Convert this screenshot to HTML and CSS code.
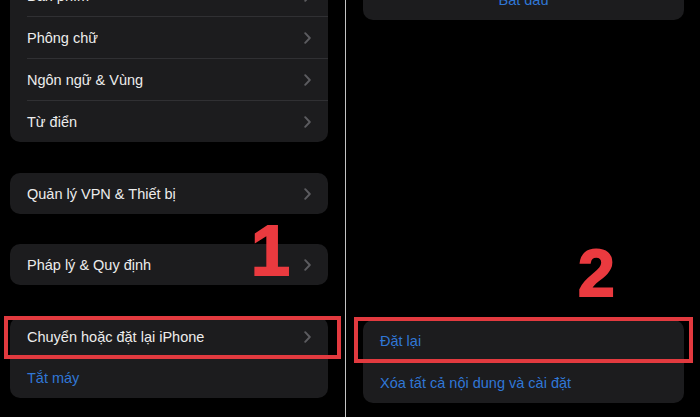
FILE: index.html
```html
<!DOCTYPE html>
<html lang="vi">
<head>
<meta charset="utf-8">
<title>Cài đặt chung</title>
<link rel="stylesheet" href="styles.css">
</head>
<body>
<div class="screen">
  <section class="panel panel-left">
    <div class="group group-first-left">
      <div class="row"><div class="row-body"><span>Bàn phím</span><svg class="chev" viewBox="0 0 7 12"><path d="M1.2 1.2 5.8 6 1.2 10.8"/></svg></div></div>
      <div class="row"><div class="row-body"><span>Phông chữ</span><svg class="chev" viewBox="0 0 7 12"><path d="M1.2 1.2 5.8 6 1.2 10.8"/></svg></div></div>
      <div class="row"><div class="row-body"><span>Ngôn ngữ &amp; Vùng</span><svg class="chev" viewBox="0 0 7 12"><path d="M1.2 1.2 5.8 6 1.2 10.8"/></svg></div></div>
      <div class="row"><div class="row-body"><span>Từ điển</span><svg class="chev" viewBox="0 0 7 12"><path d="M1.2 1.2 5.8 6 1.2 10.8"/></svg></div></div>
    </div>
    <div class="group group-vpn">
      <div class="row"><div class="row-body"><span>Quản lý VPN &amp; Thiết bị</span><svg class="chev" viewBox="0 0 7 12"><path d="M1.2 1.2 5.8 6 1.2 10.8"/></svg></div></div>
    </div>
    <div class="group group-legal">
      <div class="row"><div class="row-body"><span>Pháp lý &amp; Quy định</span><svg class="chev" viewBox="0 0 7 12"><path d="M1.2 1.2 5.8 6 1.2 10.8"/></svg></div></div>
    </div>
    <div class="group group-reset">
      <div class="row mark mark-left"><div class="row-body"><span>Chuyển hoặc đặt lại iPhone</span><svg class="chev" viewBox="0 0 7 12"><path d="M1.2 1.2 5.8 6 1.2 10.8"/></svg></div></div>
      <div class="row"><div class="row-body link"><span>Tắt máy</span></div></div>
    </div>
    <div class="step step-one">1</div>
  </section>
  <div class="divider"></div>
  <section class="panel panel-right">
    <div class="group group-first-right">
      <div class="row"><div class="row-body link centered"><span>Bắt đầu</span></div></div>
    </div>
    <div class="group group-erase">
      <div class="row mark mark-right"><div class="row-body link"><span>Đặt lại</span></div></div>
      <div class="row"><div class="row-body link"><span>Xóa tất cả nội dung và cài đặt</span></div></div>
    </div>
    <div class="step step-two">2</div>
  </section>
</div>
</body>
</html>
```

FILE: styles.css
```css
* { box-sizing: border-box; }

html, body {
  margin: 0;
  padding: 0;
  background: #000;
}

body {
  width: 700px;
  height: 417px;
  overflow: hidden;
  font-family: "Liberation Sans", Arial, sans-serif;
  font-size: 14.5px;
  color: #ececec;
}

.screen {
  display: flex;
  width: 700px;
  height: 417px;
}

.panel {
  position: relative;
  display: flex;
  flex-direction: column;
  height: 417px;
}

.panel-left {
  width: 345px;
  padding: 0 17px 0 10px;
}

.divider {
  width: 1px;
  height: 417px;
  background: #c4c4c4;
}

.panel-right {
  width: 354px;
  padding: 0 16px 14px 17px;
}

.group {
  background: #1c1c1e;
  border-radius: 10px;
}

.row {
  padding-left: 17px;
}

.row-body {
  display: flex;
  align-items: center;
  justify-content: space-between;
  height: 41px;
  padding-right: 17px;
}

.row + .row .row-body {
  border-top: 1px solid #303033;
  height: 42px;
}

.group-reset .row-body {
  height: 40px;
}

.group-reset .row + .row .row-body {
  height: 41px;
}

.row-body.link {
  color: #3077d6;
}

.row-body.centered {
  justify-content: center;
  padding-right: 17px;
}

.chev {
  width: 7px;
  height: 12px;
  fill: none;
  stroke: #5c5c60;
  stroke-width: 1.9;
  stroke-linecap: round;
  stroke-linejoin: round;
}

.group-first-left { margin-top: -25px; }
.group-vpn { margin-top: 31px; }
.group-legal { margin-top: 30px; }
.group-reset { margin-top: 32px; }

.group-first-right { margin-top: -21px; }
.group-erase { margin-top: auto; }

.mark {
  position: relative;
}

.mark::after {
  content: "";
  position: absolute;
  border: 4px solid #e23a3f;
  pointer-events: none;
}

.mark-left::after {
  inset: -1px -13px -2px -6px;
}

.mark-right::after {
  inset: -3px -9px -2px -9px;
}

.step {
  position: absolute;
  font-family: "Liberation Sans", Arial, sans-serif;
  font-weight: 700;
  line-height: 1;
  color: #ea3a3f;
  -webkit-text-stroke: 2px #ea3a3f;
}

.step-one {
  font-size: 70px;
  top: 216px;
  left: 251px;
}

.step-two {
  font-size: 66px;
  top: 240px;
  left: 232px;
}
```
